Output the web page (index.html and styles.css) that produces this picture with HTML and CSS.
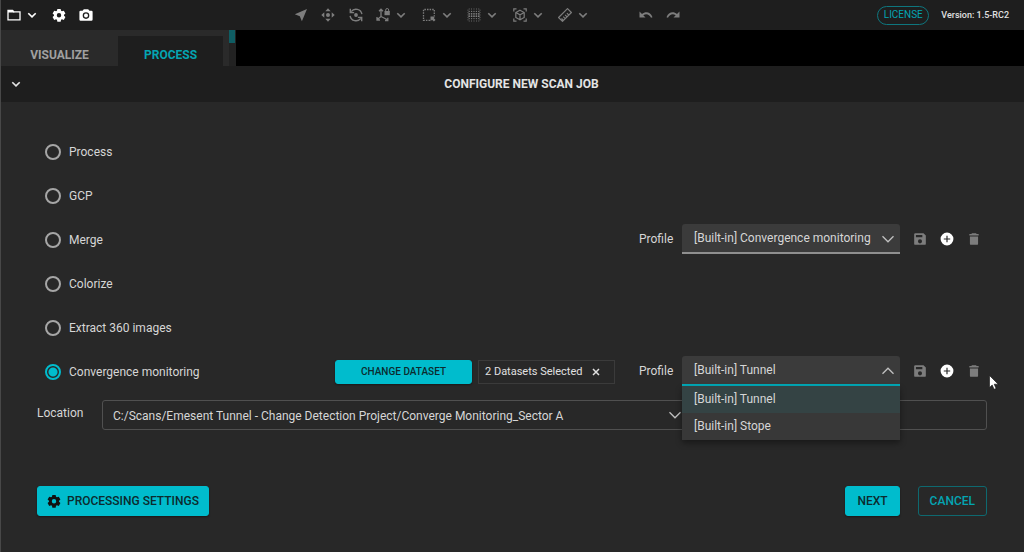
FILE: index.html
```html
<!DOCTYPE html>
<html lang="en">
  <head>
    <meta charset="utf-8" />
    <meta name="viewport" content="width=device-width, initial-scale=1" />
    <title>Configure New Scan Job</title>
    <link rel="stylesheet" href="styles.css">
  </head>
  <body>
    <!-- shared icons -->
    <svg class="sprite" aria-hidden="true">
      <symbol id="chevron" viewBox="0 0 14 14">
        <path d="M3.300 5.200 7 8.900l3.700-3.700" fill="none" stroke="currentColor" stroke-width="1.600" />
      </symbol>
      <symbol id="arrow-down" viewBox="0 0 14 14">
        <path d="M1.500 4.200 7 9.800l5.500-5.600" fill="none" stroke="currentColor" stroke-width="1.300" />
      </symbol>
      <symbol id="gear" viewBox="0 0 24 24">
        <path fill="currentColor" fill-rule="evenodd" d="M9.200 1.500h5.600l.7 3.200 1.600.9 3.100-1 2.800 4.800-2.400 2.200v1.800l2.400 2.200-2.800 4.800-3.100-1-1.600.9-.7 3.200H9.200l-.7-3.200-1.600-.9-3.100 1L1 15.600l2.400-2.200v-1.800L1 9.400l2.800-4.800 3.100 1 1.600-.9zM12 8.700a3.800 3.800 0 1 0 0 7.600 3.800 3.800 0 0 0 0-7.600z" />
      </symbol>
      <symbol id="save" viewBox="0 0 24 24">
        <path fill="currentColor" fill-rule="evenodd" d="M4 2h14l4 4v14a2 2 0 0 1-2 2H4a2 2 0 0 1-2-2V4a2 2 0 0 1 2-2zm1 3v4h11V5zm7 7.500a3.500 3.500 0 1 0 0 7 3.500 3.500 0 0 0 0-7z" />
      </symbol>
      <symbol id="add" viewBox="0 0 24 24">
        <path fill="currentColor" fill-rule="evenodd" d="M12 1a11 11 0 1 0 0 22 11 11 0 0 0 0-22zm-1 5.500h2V11h4.500v2H13v4.500h-2V13H6.500v-2H11z" />
      </symbol>
      <symbol id="trash" viewBox="0 0 24 24">
        <path fill="currentColor" d="M8.500 2h7l1 1.500H20V6H4V3.500h3.500zM5 7.500h14V20a2 2 0 0 1-2 2H7a2 2 0 0 1-2-2z" />
      </symbol>
    </svg>

    <header class="topbar">
      <div class="file-tools">
        <button class="tool menu-tool" aria-label="File">
          <svg class="icon" viewBox="0 0 14 14"><path d="M1 3.200v8.600h12V3.800H6.800L5.500 2.500H1z" fill="none" stroke="currentColor" stroke-width="1.300" /><path d="M1 2.500h5l1.500 2H1z" fill="currentColor" /></svg>
          <svg class="icon"><use href="#chevron" /></svg>
        </button>
        <button class="tool" aria-label="Settings"><svg class="icon"><use href="#gear" /></svg></button>
        <button class="tool" aria-label="Screenshot">
          <svg class="icon" viewBox="0 0 14 14"><path fill="currentColor" fill-rule="evenodd" d="M4.800 1.200h4.400l1.200 1.500h2A1.200 1.200 0 0 1 13.600 4v7.600a1.200 1.200 0 0 1-1.200 1.200H1.600A1.200 1.200 0 0 1 .4 11.600V4a1.200 1.200 0 0 1 1.200-1.300h2zM7 4.300a3.300 3.300 0 1 0 0 6.600 3.300 3.300 0 0 0 0-6.600z" /><circle cx="7" cy="7.600" r="2" fill="currentColor" /></svg>
        </button>
      </div>

      <div class="view-tools">
        <button class="tool" aria-label="Navigate"><svg class="icon" viewBox="0 0 14 14"><path fill="currentColor" d="M13 1 .8 6.200l5 2 2.100 5z" /></svg></button>
        <button class="tool" aria-label="Pan">
          <svg class="icon" viewBox="0 0 14 14"><path fill="currentColor" d="M7 .3 9.700 3.300H4.300zM7 13.700l2.700-3H4.300zM.3 7l3-2.700v5.400zM13.700 7l-3-2.700v5.400z" /><circle cx="7" cy="7" r="2" fill="currentColor" /></svg>
        </button>
        <button class="tool" aria-label="Orbit">
          <svg class="icon" viewBox="0 0 14 14"><path fill="none" stroke="currentColor" stroke-width="1.400" d="M12.900 6.200A6 6 0 0 0 2.200 3.600M1.100 7.800a6 6 0 0 0 10.700 2.600M1.300.8v3.800h3.800M12.700 13.200V9.400H8.900" /><circle cx="7" cy="7" r="1.900" fill="currentColor" /></svg>
        </button>
        <button class="tool menu-tool" aria-label="Axis lock">
          <svg class="icon" viewBox="0 0 14 14"><path fill="none" stroke="currentColor" stroke-width="1.300" d="M5 1.500v7L1 11.800M5 8.500l6 3M3 3.200l2-2 2 2M1 9v3h3M9 12.500h2.800V9.800" /><path fill="currentColor" d="M8.500 3h5.300v4.200H8.500z" /><path fill="none" stroke="currentColor" d="M9.700 3.500V2a1.500 1.500 0 0 1 3 0v1.500" /></svg>
          <svg class="icon"><use href="#chevron" /></svg>
        </button>
        <button class="tool menu-tool" aria-label="Select area">
          <svg class="icon" viewBox="0 0 14 14"><path fill="none" stroke="currentColor" stroke-width="1.300" stroke-dasharray="1.500 1.100" d="M8 12.300H1.500V1.500h10.800V8" /><path fill="currentColor" d="M8.500 8.500h4.800L11.800 10l1.700 1.900-1.600 1.600-1.900-1.700-1.500 1.500z" /></svg>
          <svg class="icon"><use href="#chevron" /></svg>
        </button>
        <button class="tool menu-tool" aria-label="Point display">
          <svg class="icon" viewBox="0 0 14 14"><g fill="none" stroke="currentColor" stroke-linecap="round" stroke-dasharray="0 2.400"><path stroke-width="1" d="M2.200 1h10M2.200 13h10M1 2.200v10M13 2.200v10" /><path stroke-width="1.300" d="M2.200 3.400h10M2.200 10.600h10" /><path stroke-width="1.800" d="M2.200 5.800h10M2.200 8.200h10" /></g></svg>
          <svg class="icon"><use href="#chevron" /></svg>
        </button>
        <button class="tool menu-tool" aria-label="Clip box">
          <svg class="icon" viewBox="0 0 14 14"><path fill="none" stroke="currentColor" stroke-width="1.200" d="M.8 3.500V.8h2.700M10.500.8h2.700v2.700M13.200 10.500v2.700h-2.700M3.500 13.200H.8v-2.700M7 2.300l4.200 2.200v5L7 11.800 2.800 9.500v-5zM2.800 4.500 7 6.800l4.200-2.300M7 6.800v5" /></svg>
          <svg class="icon"><use href="#chevron" /></svg>
        </button>
        <button class="tool menu-tool" aria-label="Measure">
          <svg class="icon" viewBox="0 0 14 14"><path fill="none" stroke="currentColor" stroke-width="1.200" stroke-linejoin="round" d="M9.500.6 13.400 4.500 4.500 13.400.6 9.500zM5.200 12.200 3.500 10.500M7 10.400 5.300 8.700M8.800 8.600 7.100 6.900M10.600 6.800 8.900 5.100" /></svg>
          <svg class="icon"><use href="#chevron" /></svg>
        </button>
      </div>

      <div class="history-tools">
        <button class="tool" aria-label="Undo"><svg class="icon" viewBox="0 0 14 14"><path fill="currentColor" d="M.5 3.500v6h6L4.300 7.300C7 5.200 10.300 6 12 9.700l1.500-.5C11.700 4.300 7 2.800 3 5.900z" /></svg></button>
        <button class="tool" aria-label="Redo"><svg class="icon" viewBox="0 0 14 14"><path fill="currentColor" d="M13.500 3.500v6h-6l2.200-2.200C7 5.200 3.700 6 2 9.700L.5 9.200C2.300 4.300 7 2.800 11 5.900z" /></svg></button>
      </div>

      <div class="app-info">
        <button class="license">LICENSE</button>
        <span class="version">Version: 1.5-RC2</span>
      </div>
    </header>

    <div class="workspace">
      <nav class="tabs">
        <a class="tab" href="#visualize">VISUALIZE</a>
        <a class="tab active" href="#process">PROCESS</a>
      </nav>
      <div class="scroll-track"><div class="scroll-thumb"></div></div>
    </div>

    <main class="panel">
      <div class="panel-header">
        <button class="tool collapse" aria-label="Collapse"><svg class="icon"><use href="#chevron" /></svg></button>
        <h1 class="panel-title">CONFIGURE NEW SCAN JOB</h1>
      </div>

      <form class="job-form">
        <div class="job-row">
          <label class="job-type"><input class="radio" type="radio" name="job" />Process</label>
        </div>
        <div class="job-row">
          <label class="job-type"><input class="radio" type="radio" name="job" />GCP</label>
        </div>
        <div class="job-row">
          <label class="job-type"><input class="radio" type="radio" name="job" />Merge</label>
          <div class="profile">
            <label class="profile-label" for="merge-profile">Profile</label>
            <div class="select-wrap">
              <select class="profile-select" id="merge-profile">
                <option>[Built-in] Convergence monitoring</option>
              </select>
              <svg class="icon select-arrow"><use href="#arrow-down" /></svg>
            </div>
            <div class="profile-actions">
              <button class="tool dim" type="button" aria-label="Save profile"><svg class="icon"><use href="#save" /></svg></button>
              <button class="tool" type="button" aria-label="Add profile"><svg class="icon"><use href="#add" /></svg></button>
              <button class="tool dim" type="button" aria-label="Delete profile"><svg class="icon"><use href="#trash" /></svg></button>
            </div>
          </div>
        </div>
        <div class="job-row">
          <label class="job-type"><input class="radio" type="radio" name="job" />Colorize</label>
        </div>
        <div class="job-row">
          <label class="job-type"><input class="radio" type="radio" name="job" />Extract 360 images</label>
        </div>
        <div class="job-row">
          <label class="job-type"><input class="radio" type="radio" name="job" checked />Convergence monitoring</label>
          <div class="dataset">
            <button class="btn btn-small" type="button">CHANGE DATASET</button>
            <div class="dataset-chip">
              <span>2 Datasets Selected</span>
              <button class="tool" type="button" aria-label="Clear datasets">
                <svg class="icon" viewBox="0 0 14 14"><path d="m4 4 6 6m0-6-6 6" fill="none" stroke="currentColor" stroke-width="1.500" /></svg>
              </button>
            </div>
          </div>
          <div class="profile">
            <label class="profile-label" for="monitoring-profile">Profile</label>
            <div class="select-wrap open">
              <select class="profile-select" id="monitoring-profile">
                <option>[Built-in] Tunnel</option>
                <option>[Built-in] Stope</option>
              </select>
              <svg class="icon select-arrow"><use href="#arrow-down" /></svg>
              <ul class="menu" role="listbox" aria-label="Profile">
                <li class="menu-item selected" role="option" aria-selected="true">[Built-in] Tunnel</li>
                <li class="menu-item" role="option" aria-selected="false">[Built-in] Stope</li>
              </ul>
            </div>
            <div class="profile-actions">
              <button class="tool dim" type="button" aria-label="Save profile"><svg class="icon"><use href="#save" /></svg></button>
              <button class="tool" type="button" aria-label="Add profile"><svg class="icon"><use href="#add" /></svg></button>
              <button class="tool dim" type="button" aria-label="Delete profile"><svg class="icon"><use href="#trash" /></svg></button>
            </div>
            <svg class="cursor" viewBox="0 0 10 15" aria-hidden="true"><path d="M.5.5v12l2.700-2.500 1.900 4.300 2-.9L5.200 9.200h4z" fill="#fff" stroke="#111" stroke-width=".6" /></svg>
          </div>
        </div>

        <div class="location">
          <label class="location-label" for="location">Location</label>
          <div class="select-wrap">
            <select class="field" id="location">
              <option>C:/Scans/Emesent Tunnel - Change Detection Project/Converge Monitoring_Sector A</option>
            </select>
            <svg class="icon select-arrow"><use href="#arrow-down" /></svg>
          </div>
          <input class="field" type="text" aria-label="Job name" />
        </div>

        <div class="actions">
          <button class="btn btn-settings" type="button"><svg class="icon"><use href="#gear" /></svg>PROCESSING SETTINGS</button>
          <button class="btn btn-next" type="button">NEXT</button>
          <button class="btn btn-outline" type="button">CANCEL</button>
        </div>
      </form>
    </main>
  </body>
</html>
```
FILE: styles.css
```css
* {
  box-sizing: border-box;
}
body,
h1,
ul {
  margin: 0;
  padding: 0;
}
body {
  min-height: 100vh;
  background-color: #282828;
  border-left: 1px solid #484848;
  color: #d6d6d6;
}
body,
button,
input,
select {
  font-family: Roboto, "Liberation Sans", sans-serif;
  font-size: 12px;
  line-height: 16px;
}
button {
  cursor: pointer;
}
.sprite {
  display: none;
}
.icon {
  display: block;
  width: 14px;
  height: 14px;
  flex-shrink: 0;
}
.tool {
  display: flex;
  padding: 0;
  border: 0;
  background: none;
  color: inherit;
}
.menu-tool {
  gap: 4px;
}
.dim {
  color: #7d7d7d;
}

/* top bar */
.topbar {
  display: flex;
  align-items: center;
  height: 30px;
  padding: 0 15px 0 6px;
  background-color: #1e1e1e;
}
.file-tools {
  display: flex;
  gap: 13px;
  width: 287px;
  color: #fff;
}
.view-tools {
  display: flex;
  justify-content: space-between;
  width: 296px;
  color: #7d7d7d;
}
.history-tools {
  display: flex;
  gap: 13px;
  margin-left: 49px;
  color: #7d7d7d;
}
.app-info {
  display: flex;
  align-items: center;
  gap: 12px;
  margin-left: auto;
}
.license {
  height: 19px;
  width: 52px;
  padding: 0;
  border: 1px solid #0e767e;
  border-radius: 10px;
  background: none;
  color: #04a5b2;
  font-size: 10px;
}
.version {
  color: #e0e0e0;
  font-size: 9px;
  font-weight: 500;
}

/* tabs */
.workspace {
  display: flex;
  height: 36px;
  background-color: #000;
}
.tabs {
  display: flex;
  align-items: flex-end;
  width: 228px;
  background-color: #2a2a2a;
}
.tab {
  display: flex;
  align-items: center;
  justify-content: center;
  width: 117px;
  height: 30px;
  padding-top: 8px;
  color: #a0a0a0;
  font-weight: 700;
  text-decoration: none;
}
.tab.active {
  width: 105px;
  background-color: #1e1e1e;
  color: #04a5b2;
}
.scroll-track {
  width: 7px;
  background-color: #222;
}
.scroll-thumb {
  width: 6px;
  height: 13px;
  background-color: #0f5d63;
}

/* panel */
.panel-header {
  display: grid;
  grid-template-columns: 14px 1fr;
  align-items: center;
  height: 36px;
  padding: 0 4px 0 8px;
  background-color: #1e1e1e;
  color: #e4e4e4;
}
.panel-title {
  font-size: 12px;
  font-weight: 700;
  text-align: center;
}
.job-form {
  padding: 28px 37px 36px 36px;
}
.job-row {
  display: grid;
  grid-template-columns: 1fr 280px 342px;
  column-gap: 24px;
  align-items: center;
  height: 44px;
  padding: 0 6px 0 8px;
}
.job-type {
  display: flex;
  align-items: center;
  gap: 8px;
}
.radio {
  appearance: none;
  width: 16px;
  height: 16px;
  margin: 0;
  border: 2px solid #a6a6a6;
  border-radius: 50%;
}
.radio:checked {
  border-color: #00bccd;
  background: radial-gradient(circle, #00bccd 4px, transparent 5px);
}
.dataset {
  display: grid;
  grid-template-columns: 1fr 1fr;
  gap: 6px;
}
.dataset-chip {
  display: flex;
  align-items: center;
  justify-content: space-between;
  height: 24px;
  padding: 0 11px 0 6px;
  border: 1px solid #3b3b3b;
  font-size: 11px;
  white-space: nowrap;
  color: #e0e0e0;
}
.profile {
  display: flex;
  align-items: center;
  grid-column: 3;
  position: relative;
  margin-bottom: 2px;
}
.profile-label {
  width: 43px;
}
.profile-actions {
  display: flex;
  gap: 13px;
  margin-left: 13px;
  color: #fff;
}
.profile-actions .dim {
  color: #7d7d7d;
}
.select-wrap {
  position: relative;
  flex: 1;
}
.select-arrow {
  position: absolute;
  top: 8px;
  right: 5px;
  color: #c0c0c0;
  pointer-events: none;
}
.profile-select {
  appearance: none;
  display: block;
  width: 100%;
  height: 30px;
  padding: 0 20px 0 12px;
  border: 0;
  border-bottom: 2px solid #8f8f8f;
  border-radius: 3px 3px 0 0;
  background-color: #3b3b3b;
  color: #d6d6d6;
}
.open .profile-select {
  border-bottom-color: #00a9b8;
}
.open .select-arrow {
  transform: rotate(180deg);
}
.menu {
  position: absolute;
  top: 100%;
  left: 0;
  right: 0;
  z-index: 10;
  list-style: none;
  background-color: #383838;
  box-shadow: 0 3px 6px rgba(0, 0, 0, 0.4);
}
.menu-item {
  padding: 5px 12px 6px;
}
.menu-item.selected {
  background-color: #344344;
}
.cursor {
  position: absolute;
  top: 19px;
  left: 350px;
  width: 10px;
  height: 15px;
}

/* location */
.location {
  display: grid;
  grid-template-columns: 65px 2fr 1fr;
  align-items: center;
  margin-top: 6px;
}
.location-label {
  padding-bottom: 4px;
}
.location .select-arrow {
  right: 10px;
}
.field {
  appearance: none;
  display: block;
  width: 100%;
  height: 30px;
  padding: 2px 24px 0 10px;
  border: 1px solid #505050;
  border-radius: 3px;
  background: none;
  color: #d6d6d6;
}

/* buttons */
.actions {
  display: flex;
  gap: 18px;
  margin-top: 56px;
}
.btn {
  display: flex;
  align-items: center;
  justify-content: center;
  gap: 6px;
  height: 30px;
  padding: 0 11px;
  border: 1px solid #00bccd;
  border-radius: 3px;
  background-color: #00bccd;
  color: #0c2b2e;
  font-weight: 500;
  box-shadow: 0 1px 2px rgba(0, 0, 0, 0.4);
}
.btn .icon {
  color: #111;
}
.btn-small {
  height: 24px;
  font-size: 10px;
}
.btn-settings {
  padding: 0 9px;
}
.btn-next {
  margin-left: auto;
}
.btn-outline {
  border-color: #0e6970;
  background: none;
  color: #04a5b2;
  box-shadow: none;
}
```
